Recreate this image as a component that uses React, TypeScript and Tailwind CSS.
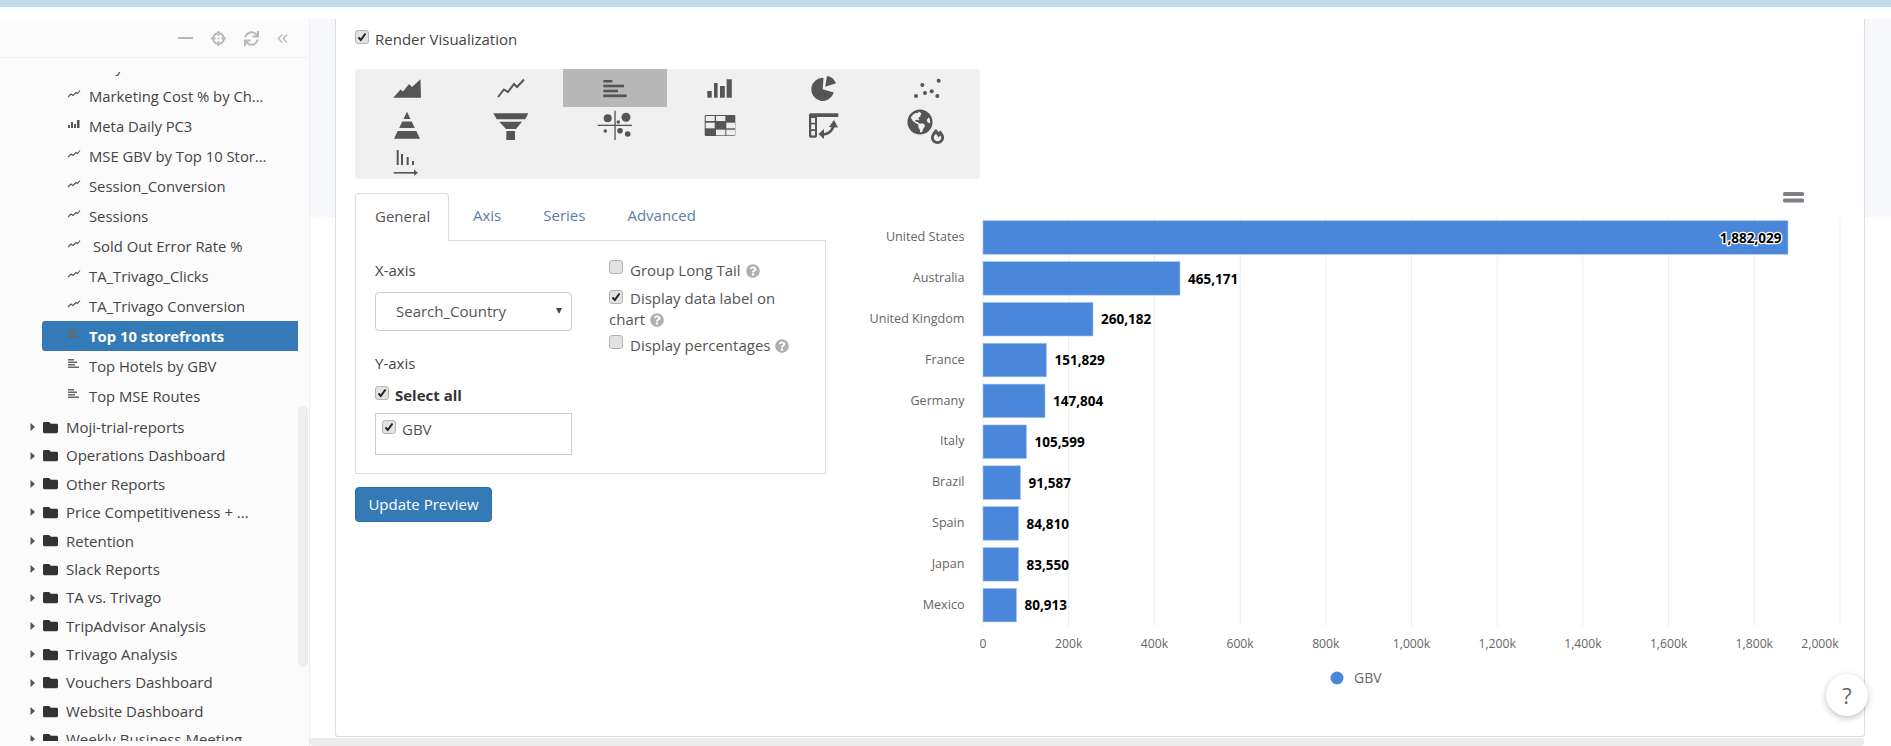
import { FaCrosshairs, FaFireAlt, FaFolder, FaGlobeAmericas, FaQuestionCircle, FaSync } from "react-icons/fa";
import { ChevronsLeft } from "lucide-react";

type ReportKind = "line" | "vbar" | "hbar";

const reports: { name: string; kind: ReportKind; active?: boolean; pad?: boolean }[] = [
  { name: "Daily", kind: "line" },
  { name: "Marketing Cost % by Ch...", kind: "line" },
  { name: "Meta Daily PC3", kind: "vbar" },
  { name: "MSE GBV by Top 10 Stor...", kind: "line" },
  { name: "Session_Conversion", kind: "line" },
  { name: "Sessions", kind: "line" },
  { name: "Sold Out Error Rate %", kind: "line", pad: true },
  { name: "TA_Trivago_Clicks", kind: "line" },
  { name: "TA_Trivago Conversion", kind: "line" },
  { name: "Top 10 storefronts", kind: "hbar", active: true },
  { name: "Top Hotels by GBV", kind: "hbar" },
  { name: "Top MSE Routes", kind: "hbar" },
];

const folders = [
  "Moji-trial-reports",
  "Operations Dashboard",
  "Other Reports",
  "Price Competitiveness + ...",
  "Retention",
  "Slack Reports",
  "TA vs. Trivago",
  "TripAdvisor Analysis",
  "Trivago Analysis",
  "Vouchers Dashboard",
  "Website Dashboard",
  "Weekly Business Meeting",
];

const bars = [
  { country: "United States", value: "1,882,029", end: 1788 },
  { country: "Australia", value: "465,171", end: 1180 },
  { country: "United Kingdom", value: "260,182", end: 1093 },
  { country: "France", value: "151,829", end: 1046.5 },
  { country: "Germany", value: "147,804", end: 1045 },
  { country: "Italy", value: "105,599", end: 1026.5 },
  { country: "Brazil", value: "91,587", end: 1020.5 },
  { country: "Spain", value: "84,810", end: 1018.5 },
  { country: "Japan", value: "83,550", end: 1018.5 },
  { country: "Mexico", value: "80,913", end: 1016.5 },
];

const ticks = ["0", "200k", "400k", "600k", "800k", "1,000k", "1,200k", "1,400k", "1,600k", "1,800k", "2,000k"];

const ReportIcon = ({ kind }: { kind: ReportKind }) => {
  if (kind === "line") {
    return (
      <svg width="14" height="10" viewBox="0 0 14 10" fill="none" stroke="#555" strokeWidth="1.1">
        <polyline points="1,8 4,5 6,6.5 9,3.5 10.5,4.5 13,1.5" />
      </svg>
    );
  }
  if (kind === "vbar") {
    return (
      <svg width="14" height="10" viewBox="0 0 14 10" fill="#555">
        <rect x="1" y="6" width="2" height="3" />
        <rect x="4" y="3" width="2" height="6" />
        <rect x="7" y="5" width="2" height="4" />
        <rect x="10" y="1" width="2.5" height="8" />
      </svg>
    );
  }
  return (
    <svg width="14" height="12" viewBox="0 0 14 12" fill="#666">
      <rect x="1" y="1" width="6" height="1.5" />
      <rect x="1" y="3.5" width="9" height="1.5" />
      <rect x="1" y="6" width="7" height="1.5" />
      <rect x="1" y="8.5" width="11" height="1.5" />
    </svg>
  );
};

const Checkbox = ({ checked, className = "" }: { checked?: boolean; className?: string }) => (
  <span
    className={`inline-flex h-[14px] w-[14px] items-center justify-center rounded-[3px] border border-[#b5b5b5] bg-[#e2e2e2] ${className}`}
  >
    {checked && (
      <svg width="10" height="10" viewBox="0 0 10 10" fill="none" stroke="#222" strokeWidth="2">
        <polyline points="1.5,5.5 3.8,8 8.5,1.5" />
      </svg>
    )}
  </span>
);

const Help = () => <FaQuestionCircle className="ml-[5px] inline-block align-[-2px] text-[#b0b0b0]" size={14} />;

const chartIcons = [
  <path key="area" d="M8.3 28.7 L15.5 20.5 L18 22.5 L24 15 L27 18 L35.5 10.3 L36 28.7 Z" fill="#555" />,
  <polyline key="line" points="9,28 15,20.5 19,23 25,15 28,18 35,10.5" fill="none" stroke="#555" strokeWidth="2" />,
  <g key="hbar" fill="#555">
    <rect x="10.3" y="11" width="9" height="2.5" />
    <rect x="10.3" y="15.7" width="20.7" height="2.6" />
    <rect x="10.3" y="20.7" width="14.7" height="2.6" />
    <rect x="10.3" y="25.4" width="23.3" height="2.8" />
  </g>,
  <g key="vbar" fill="#555">
    <rect x="9.3" y="22" width="4.4" height="6.7" />
    <rect x="16" y="14" width="3.6" height="14.7" />
    <rect x="22" y="17" width="4.8" height="11.7" />
    <rect x="28.6" y="10.3" width="5.2" height="18.4" />
  </g>,
  <g key="pie" fill="#555">
    <path d="M20.7 20.3 L31.8 23.5 A11.5 11.5 0 1 1 21.5 8.9 Z" />
    <path d="M23.2 17.8 L25 7 A12 12 0 0 1 34 14.2 Z" />
  </g>,
  <g key="scatter" fill="#555">
    <circle cx="32.7" cy="11.7" r="2" />
    <circle cx="16.3" cy="16" r="2" />
    <circle cx="10" cy="27" r="2" />
    <circle cx="19" cy="24" r="2" />
    <circle cx="25.7" cy="22.3" r="2" />
    <circle cx="31.3" cy="27" r="2" />
  </g>,
  <g key="pyramid" fill="#555">
    <path d="M22 4.7 L25.5 12 L18.5 12 Z" />
    <path d="M17.3 14.5 L26.7 14.5 L29.8 21 L14.2 21 Z" />
    <path d="M12.7 24 L31.3 24 L35 31.7 L9 31.7 Z" />
  </g>,
  <g key="funnel" fill="#555">
    <path d="M4.3 6.3 L39.3 6.3 L36.3 12.3 L7.7 12.3 Z" />
    <path d="M10.3 14.7 L33 14.7 L27 22 L17 22 Z" />
    <rect x="17.3" y="24" width="8.7" height="9" />
  </g>,
  <g key="quadrant" fill="#555">
    <rect x="21.4" y="3.7" width="1.3" height="29.3" />
    <rect x="4.7" y="17.7" width="34.3" height="1.3" />
    <circle cx="14.7" cy="11.3" r="4" />
    <circle cx="33" cy="10.3" r="4.5" />
    <circle cx="25.3" cy="15" r="1.8" />
    <circle cx="12.3" cy="24" r="1.8" />
    <circle cx="27" cy="23.7" r="2.8" />
    <circle cx="34.7" cy="27" r="2.8" />
  </g>,
  <g key="heatmap">
    <rect x="6.7" y="8" width="30.6" height="21" rx="1" fill="#555" />
    <g fill="#eee">
      <rect x="7.7" y="9" width="9" height="5" />
      <rect x="18" y="9" width="9.3" height="5" />
      <rect x="7.7" y="15.7" width="9" height="5.6" />
      <rect x="28.3" y="15.7" width="8.7" height="5.6" />
      <rect x="18" y="22.7" width="9.3" height="5.6" />
      <rect x="28.3" y="22.7" width="8.7" height="5.6" />
    </g>
  </g>,
  <g key="pivot">
    <path d="M8.5 6.3 H36.3 V10 H15 V29 Q15 30.7 13.3 30.7 H8.7 Q7 30.7 7 29 V7.8 Q7 6.3 8.5 6.3 Z" fill="#555" />
    <g fill="#eee">
      <rect x="9.2" y="11" width="3.8" height="4.8" />
      <rect x="9.2" y="17.4" width="3.8" height="4.8" />
      <rect x="9.2" y="24" width="3.8" height="4.4" />
    </g>
    <path d="M21 27.5 Q29 27 31.5 19" fill="none" stroke="#555" strokeWidth="2.6" />
    <path d="M27 20 L32 13 L36 20.5 Z" fill="#555" />
    <path d="M22 22 L16.5 27 L22 32 Z" fill="#555" />
  </g>,
];

const App = () => (
  <div className="h-[746px] w-[1891px] overflow-hidden bg-white font-['Open_Sans',sans-serif] text-[15px] text-[#444]">
    <div className="h-[7px] bg-[#c3dced]" />
    <div className="h-[12px]" />
    <div className="relative flex h-[727px]">
      <aside className="relative h-full w-[310px] shrink-0 border-r border-[#eeeeee] bg-[#fbfbfb]">
        <div className="flex h-[39px] items-center justify-end gap-[18px] border-b border-[#f0f0f0] pr-[18px] text-[#b8b8b8]">
          <span className="h-[2px] w-[15px] bg-[#b8b8b8]" />
          <FaCrosshairs size={15} />
          <FaSync size={15} />
          <ChevronsLeft size={17} strokeWidth={1.8} className="-ml-[3px]" />
        </div>
        <div className="mt-[14px] h-[669px] overflow-hidden">
          <div className="-mt-[21px]">
            {reports.map((report) => (
              <div
                key={report.name}
                className={`ml-[42px] flex h-[30px] w-[256px] items-center rounded-l-[3px] pl-[25px] text-[14.8px] ${
                  report.active ? "bg-[#337ab7] font-bold text-white" : ""
                }`}
              >
                <span className="flex w-[22px] shrink-0 -translate-y-[2px]">
                  <ReportIcon kind={report.kind} />
                </span>
                <span className={report.pad ? "pl-[4px]" : ""}>{report.name}</span>
              </div>
            ))}
          </div>
          <div className="mt-[2px]">
            {folders.map((folder) => (
              <div key={folder} className="flex h-[28.4px] items-center pl-[30px]">
                <svg width="5" height="8" viewBox="0 0 5 8" fill="#555" className="shrink-0">
                  <path d="M0.5 0 L5 4 L0.5 8 Z" />
                </svg>
                <FaFolder className="ml-[8px] shrink-0 text-[#333]" size={15} />
                <span className="ml-[8px]">{folder}</span>
              </div>
            ))}
          </div>
        </div>
        <div className="absolute left-[298px] top-[387px] h-[261px] w-[10px] rounded-[5px] bg-[#eeeeee]" />
      </aside>

      <main className="relative flex-1 bg-[linear-gradient(#f7f8fb_198px,#ffffff_198px)]">
        <div className="ml-[25px] h-[718px] w-[1530px] rounded-b-[3px] border-x border-b border-[#dddddd] bg-white pl-[19px] pt-[11px]">
          <div className="flex h-[18px] items-center">
            <Checkbox checked className="-translate-y-[2px]" />
            <span className="ml-[6px]">Render Visualization</span>
          </div>

          <div className="mt-[21px] grid h-[110px] w-[625px] grid-cols-6 grid-rows-[38px_36px_36px] rounded-[4px] bg-[#f0f0f0]">
            {chartIcons.map((icon, index) => (
              <div key={index} className={`flex h-[36px] justify-center ${index === 2 ? "h-[38px] bg-[#b8b8b8]" : ""}`}>
                <svg width="44" height="36" viewBox="0 0 44 36">
                  {icon}
                </svg>
              </div>
            ))}
            <div className="relative flex h-[36px] justify-center">
              <FaGlobeAmericas className="absolute left-[31px] top-[2px] text-[#555]" size={26} />
              <FaFireAlt className="absolute left-[54px] top-[22px] text-[#555]" size={15} />
            </div>
            <div className="flex h-[36px] justify-center">
              <svg width="44" height="36" viewBox="0 0 44 36" fill="#555">
                <rect x="11.7" y="7" width="2" height="15" />
                <rect x="16" y="11" width="2" height="11" />
                <rect x="21.7" y="14" width="2" height="8" />
                <rect x="27" y="18" width="2" height="4" />
                <rect x="8.7" y="29" width="21" height="1.6" />
                <path d="M29 26.7 L33 29.7 L29 32.7 Z" />
              </svg>
            </div>
          </div>

          <div className="mt-[13px] flex items-start">
            <div className="w-[471px] shrink-0">
              <div className="flex h-[48px] items-center">
                <div className="relative z-10 -mb-px flex h-[48px] w-[94px] items-center rounded-t-[4px] border-x border-t border-[#dddddd] bg-white pb-[2px] pl-[19px] text-[#555]">
                  General
                </div>
                <div className="mb-[1px] ml-[24px] flex text-[#5b7ea8]">
                  <span>Axis</span>
                  <span className="ml-[42px]">Series</span>
                  <span className="ml-[42px]">Advanced</span>
                </div>
              </div>
              <div className="flex h-[234px] border border-[#dddddd] pl-[19px] pt-[19px]">
                <div className="w-[197px] shrink-0">
                  <div className="h-[20px] leading-[20px] text-[#444]">X-axis</div>
                  <div className="mt-[12px] flex h-[39px] items-center justify-between rounded-[4px] border border-[#cccccc] pl-[20px] pr-[9px] text-[#555]">
                    <span>Search_Country</span>
                    <span className="mb-[2px] h-0 w-0 border-x-[3.5px] border-t-[6px] border-x-transparent border-t-[#444]" />
                  </div>
                  <div className="mt-[22px] h-[20px] leading-[20px] text-[#444]">Y-axis</div>
                  <div className="mt-[12px] flex h-[20px] items-center">
                    <Checkbox checked className="-translate-y-[2px]" />
                    <span className="ml-[6px] font-bold text-[#333]">Select all</span>
                  </div>
                  <div className="mt-[8px] flex h-[42px] items-start border border-[#cccccc] pl-[6px] pt-[6px]">
                    <Checkbox checked />
                    <span className="ml-[6px] mt-[-2px] text-[#555]">GBV</span>
                  </div>
                </div>
                <div className="ml-[37px] w-[200px] text-[#555]">
                  <div className="leading-[21px]">
                    <Checkbox className="mr-[7px] align-[2px]" />
                    Group Long Tail
                    <Help />
                  </div>
                  <div className="mt-[7px] leading-[21px]">
                    <Checkbox checked className="mr-[7px] align-[2px]" />
                    Display data label on chart
                    <Help />
                  </div>
                  <div className="mt-[5px] leading-[21px]">
                    <Checkbox className="mr-[7px] align-[2px]" />
                    Display percentages
                    <Help />
                  </div>
                </div>
              </div>
              <button className="mt-[13px] h-[35px] w-[137px] rounded-[4px] border border-[#2e6da4] bg-[#337ab7] text-white">
                Update Preview
              </button>
            </div>

            <svg
              width="1004"
              height="520"
              viewBox="860 184 1004 520"
              className="-mt-[8px] ml-[34px] shrink-0"
              fontFamily="'Open Sans', sans-serif"
            >
              {ticks.map((tick, index) => {
                const x = 983 + index * 85.7;
                return <rect key={tick} x={x - 0.5} y="217" width="1" height="409" fill="#eeeeee" />;
              })}
              <rect x="1783" y="192" width="21" height="4" rx="1.5" fill="#7c8085" />
              <rect x="1783" y="198.5" width="21" height="4" rx="1.5" fill="#7c8085" />
              {bars.map((bar, index) => {
                const y = 220.7 + index * 40.85;
                const inside = index === 0;
                return (
                  <g key={bar.country}>
                    <text x="964.5" y={y + 20.5} textAnchor="end" fontSize="12.6" fill="#666">
                      {bar.country}
                    </text>
                    <rect x="983" y={y} width={bar.end - 983} height="33.6" fill="#4a86da" stroke="#a9c8f0" strokeWidth="0.6" />
                    <text
                      x={inside ? bar.end - 6.5 : bar.end + 8}
                      y={y + 22}
                      textAnchor={inside ? "end" : "start"}
                      fontSize="13.5"
                      fontWeight="700"
                      fill="#000"
                      stroke={inside ? "#fff" : "none"}
                      strokeWidth={inside ? 2.5 : 0}
                      paintOrder="stroke"
                    >
                      {bar.value}
                    </text>
                  </g>
                );
              })}
              {ticks.map((tick, index) => {
                const last = index === ticks.length - 1;
                return (
                  <text
                    key={tick}
                    x={last ? 1820 : 983 + index * 85.7}
                    y="648"
                    textAnchor="middle"
                    fontSize="12.2"
                    fill="#666"
                  >
                    {tick}
                  </text>
                );
              })}
              <circle cx="1337" cy="678" r="6.5" fill="#4a86da" />
              <text x="1354" y="683" fontSize="14" fill="#666">
                GBV
              </text>
            </svg>
          </div>
        </div>
        <div className="mt-[1px] h-[8px] w-[1554px] rounded-[3px] bg-[#ececec]" />

        <div className="absolute bottom-[30px] right-[23px] flex h-[42px] w-[42px] items-center justify-center rounded-full bg-white text-[22px] text-[#666] shadow-[0_2px_6px_rgba(0,0,0,0.25)]">
          ?
        </div>
      </main>
    </div>
  </div>
);

export default App;
